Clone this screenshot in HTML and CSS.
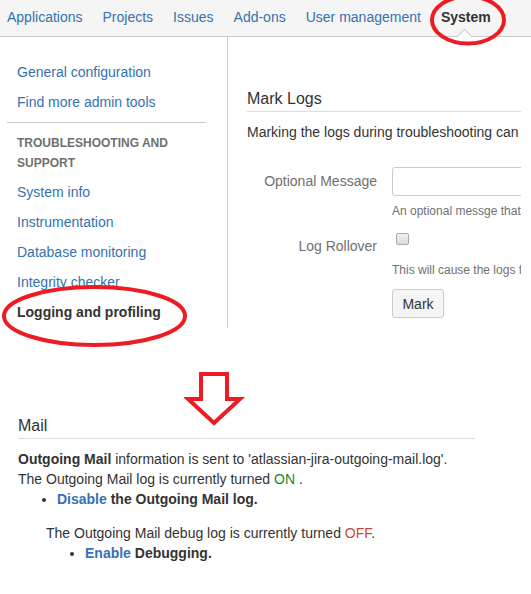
FILE: index.html
```html
<!DOCTYPE html>
<html lang="en">
<head>
<meta charset="UTF-8">
<title>System - Logging and profiling</title>
<link rel="stylesheet" href="styles.css">
</head>
<body>

  <header class="topnav">
    <a class="nav-item" href="#">Applications</a>
    <a class="nav-item" href="#">Projects</a>
    <a class="nav-item" href="#">Issues</a>
    <a class="nav-item" href="#">Add-ons</a>
    <a class="nav-item" href="#">User management</a>
    <a class="nav-item active" href="#">System
      <svg class="circle circle-system" width="82" height="52" viewBox="0 0 82 52">
        <ellipse cx="40" cy="26" rx="36" ry="23.5" />
      </svg>
    </a>
  </header>

  <div class="layout">
    <nav class="sidebar">
      <a class="side-link" href="#">General configuration</a>
      <a class="side-link" href="#">Find more admin tools</a>
      <hr class="side-divider">
      <div class="side-heading">Troubleshooting and support</div>
      <a class="side-link" href="#">System info</a>
      <a class="side-link" href="#">Instrumentation</a>
      <a class="side-link" href="#">Database monitoring</a>
      <a class="side-link" href="#">Integrity checker</a>
      <a class="side-link current" href="#">Logging and profiling
        <svg class="circle circle-logging" width="189" height="66" viewBox="0 0 189 66">
          <ellipse cx="94.5" cy="33" rx="90.5" ry="29" />
        </svg>
      </a>
    </nav>

    <main class="content">
      <h2 class="section-title">Mark Logs</h2>
      <p class="intro">Marking the logs during troubleshooting can</p>

      <form class="mark-form">
        <div class="field">
          <label class="field-label" for="msg">Optional Message</label>
          <div class="field-body">
            <input class="text-input" id="msg" type="text">
            <div class="field-desc">An optional messge that</div>
          </div>
        </div>
        <div class="field">
          <label class="field-label rollover" for="roll">Log Rollover</label>
          <div class="field-body">
            <div class="check-wrap"><input class="check" id="roll" type="checkbox"></div>
            <div class="field-desc">This will cause the logs f</div>
          </div>
        </div>
        <div class="field">
          <div class="field-label"></div>
          <div class="field-body">
            <button class="btn" type="button">Mark</button>
          </div>
        </div>
      </form>
    </main>
  </div>

  <section class="mail">
    <svg class="arrow" width="62" height="58" viewBox="0 0 62 58">
      <path d="M17 3 H43 V28 H56 L30 52 L4 28 H17 Z" />
    </svg>

    <h2 class="section-title">Mail</h2>
    <p class="line"><strong>Outgoing Mail</strong> information is sent to 'atlassian-jira-outgoing-mail.log'.</p>
    <p class="line">The Outgoing Mail log is currently turned <span class="on">ON</span> .</p>
    <ul class="actions">
      <li><a href="#">Disable</a> the Outgoing Mail log.</li>
    </ul>

    <div class="debug">
      <p class="line">The Outgoing Mail debug log is currently turned <span class="off">OFF</span>.</p>
      <ul class="actions">
        <li><a href="#">Enable</a> Debugging.</li>
      </ul>
    </div>
  </section>

</body>
</html>
```

FILE: styles.css
```css
:root {
  --link: #3572b0;
  --text: #333;
  --muted: #707070;
  --line: #ccc;
  --red: #ed1c24;
}
html, body {
  margin: 0;
  padding: 0;
}
body {
  font-family: "Liberation Sans", Arial, sans-serif;
  font-size: 14px;
  line-height: 20px;
  color: var(--text);
  background: #fff;
  width: 531px;
  height: 594px;
  overflow: hidden;
}
a {
  color: var(--link);
  text-decoration: none;
}

/* top bar */
.topnav {
  display: flex;
  gap: 20px;
  height: 36px;
  padding-left: 7px;
  background: #f5f5f5;
  border-bottom: 1px solid var(--line);
  align-items: center;
}
.nav-item {
  position: relative;
  line-height: 20px;
  margin-top: -2px;
  white-space: nowrap;
}
.nav-item.active {
  color: var(--text);
  font-weight: bold;
}
.nav-item.active::after {
  content: "";
  position: absolute;
  left: 18px;
  top: 24px;
  width: 10px;
  height: 10px;
  background: #fff;
  border-top: 1px solid var(--line);
  border-left: 1px solid var(--line);
  transform: rotate(45deg);
}

/* hand drawn marks */
.circle {
  position: absolute;
  pointer-events: none;
  z-index: 5;
}
.circle ellipse,
.arrow path {
  fill: none;
  stroke: var(--red);
  stroke-width: 4;
}
.circle-system {
  left: -13px;
  top: -13px;
}
.circle-logging {
  left: -7px;
  top: -14px;
}

/* sidebar + main */
.layout {
  display: flex;
  width: 521px;
}
.sidebar {
  flex: 0 0 199px;
  padding: 20px 21px 1px 7px;
  border-right: 1px solid var(--line);
  display: flex;
  flex-direction: column;
}
.side-link {
  position: relative;
  padding-left: 10px;
  line-height: 30px;
  white-space: nowrap;
}
.side-link.current {
  color: var(--text);
  font-weight: bold;
}
.side-divider {
  margin: 5px 0 10px;
  border: 0;
  border-top: 1px solid var(--line);
  height: 0;
}
.side-heading {
  padding-left: 10px;
  margin-bottom: 4px;
  font-size: 12px;
  font-weight: bold;
  line-height: 20px;
  text-transform: uppercase;
  color: var(--muted);
}
.content {
  flex: 1;
  min-width: 0;
  overflow: hidden;
  padding: 52px 0 0 19px;
  white-space: nowrap;
}
.section-title {
  margin: 0;
  padding-bottom: 2px;
  font-size: 16px;
  font-weight: normal;
  line-height: 20px;
  border-bottom: 1px solid #ddd;
}
.intro {
  margin: 10px 0 0;
}
.mark-form {
  margin-top: 25px;
}
.field {
  display: flex;
  gap: 15px;
  margin-bottom: 9px;
}
.field-label {
  flex: 0 0 130px;
  text-align: right;
  color: var(--muted);
  line-height: 29px;
}
.field-label.rollover {
  line-height: 20px;
  padding-top: 6px;
}
.field-body {
  display: flex;
  flex-direction: column;
}
.text-input {
  box-sizing: border-box;
  width: 250px;
  height: 29px;
  margin: 0;
  border: 1px solid var(--line);
  border-radius: 3px;
  background: #fff;
}
.field-desc {
  margin-top: 5px;
  font-size: 12px;
  line-height: 20px;
  color: var(--muted);
}
.check-wrap {
  height: 25px;
}
.check {
  appearance: none;
  box-sizing: border-box;
  margin: 3px 0 0 4px;
  width: 13px;
  height: 12px;
  border: 1px solid #a9a9a9;
  border-radius: 2px;
  background: linear-gradient(#f0f0f0, #dcdcdc);
}
.btn {
  width: 52px;
  height: 29px;
  font-family: inherit;
  font-size: 14px;
  color: var(--text);
  background: #f5f5f5;
  border: 1px solid var(--line);
  border-radius: 3px;
}

/* mail section */
.mail {
  position: relative;
  width: 457px;
  padding: 88px 0 0 18px;
}
.arrow {
  position: absolute;
  left: 184px;
  top: 43px;
}
.mail .section-title {
  margin-bottom: 10px;
}
.line {
  margin: 0;
}
.actions {
  margin: 0;
  padding-left: 39px;
  font-weight: bold;
}
.debug {
  margin: 14px 0 0 28px;
}
.on { color: #14892c; }
.off { color: #d04437; }
```
